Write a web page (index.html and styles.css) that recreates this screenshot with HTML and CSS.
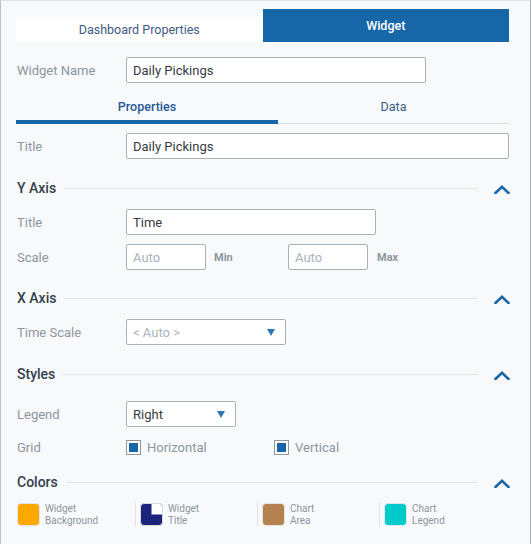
FILE: index.html
```html
<!DOCTYPE html>
<html>
<head>
<meta charset="utf-8">
<link rel="stylesheet" href="styles.css">
</head>
<body>
<div class="panel">
  <div class="tabs">
    <div class="tab">Dashboard Properties</div>
    <div class="tab active">Widget</div>
  </div>

  <div class="row row-name">
    <div class="label">Widget Name</div>
    <div class="field w-name">Daily Pickings</div>
  </div>

  <div class="subtabs">
    <div class="subtab active">Properties</div>
    <div class="subtab">Data</div>
  </div>

  <div class="row row-title">
    <div class="label">Title</div>
    <div class="field w-full">Daily Pickings</div>
  </div>

  <div class="section sec-y">
    <div class="sec-name">Y Axis</div>
    <div class="sec-line"></div>
    <svg class="chev" width="16" height="9" viewBox="0 0 16 9"><polyline points="1.5,8 8,1.8 14.5,8" fill="none" stroke="#1a65a8" stroke-width="2.6" stroke-linecap="square"/></svg>
  </div>

  <div class="row row-ytitle">
    <div class="label">Title</div>
    <div class="field w-ytitle">Time</div>
  </div>

  <div class="row row-scale">
    <div class="label">Scale</div>
    <div class="field w-scale placeholder">Auto</div>
    <div class="minmax mm-min">Min</div>
    <div class="field w-scale placeholder">Auto</div>
    <div class="minmax mm-max">Max</div>
  </div>

  <div class="section sec-x">
    <div class="sec-name">X Axis</div>
    <div class="sec-line"></div>
    <svg class="chev" width="16" height="9" viewBox="0 0 16 9"><polyline points="1.5,8 8,1.8 14.5,8" fill="none" stroke="#1a65a8" stroke-width="2.6" stroke-linecap="square"/></svg>
  </div>

  <div class="row row-time">
    <div class="label">Time Scale</div>
    <div class="field select w-time placeholder"><span>&lt; Auto &gt;</span><span class="arrow"></span></div>
  </div>

  <div class="section sec-styles">
    <div class="sec-name">Styles</div>
    <div class="sec-line"></div>
    <svg class="chev" width="16" height="9" viewBox="0 0 16 9"><polyline points="1.5,8 8,1.8 14.5,8" fill="none" stroke="#1a65a8" stroke-width="2.6" stroke-linecap="square"/></svg>
  </div>

  <div class="row row-legend">
    <div class="label">Legend</div>
    <div class="field select w-legend"><span>Right</span><span class="arrow"></span></div>
  </div>

  <div class="row row-grid">
    <div class="label">Grid</div>
    <div class="check-item ci-h"><span class="check"><span class="check-in"></span></span><span class="check-label">Horizontal</span></div>
    <div class="check-item"><span class="check"><span class="check-in"></span></span><span class="check-label">Vertical</span></div>
  </div>

  <div class="section sec-colors">
    <div class="sec-name">Colors</div>
    <div class="sec-line"></div>
    <svg class="chev" width="16" height="9" viewBox="0 0 16 9"><polyline points="1.5,8 8,1.8 14.5,8" fill="none" stroke="#1a65a8" stroke-width="2.6" stroke-linecap="square"/></svg>
  </div>

  <div class="colors">
    <div class="color-item first">
      <span class="swatch sw-orange"></span>
      <div class="color-label">Widget<br>Background</div>
    </div>
    <div class="color-item">
      <svg class="swatch-svg" width="23" height="23" viewBox="0 0 23 23"><rect x="0.5" y="0.5" width="22" height="22" rx="3.5" fill="#1b237c" stroke="#d9dde2" stroke-width="1"/><path d="M11.5 1 H19.5 A2.5 2.5 0 0 1 22 3.5 V11.5 H11.5 Z" fill="#ffffff"/></svg>
      <div class="color-label">Widget<br>Title</div>
    </div>
    <div class="color-item">
      <span class="swatch sw-brown"></span>
      <div class="color-label">Chart<br>Area</div>
    </div>
    <div class="color-item">
      <span class="swatch sw-teal"></span>
      <div class="color-label">Chart<br>Legend</div>
    </div>
  </div>
</div>
</body>
</html>
```

FILE: styles.css
```css
html, body {
  margin: 0;
  padding: 0;
  background: #ffffff;
}

body {
  font-family: Roboto, "Liberation Sans", Arial, sans-serif;
}

.panel {
  box-sizing: border-box;
  width: 531px;
  height: 544px;
  background: #f7f9fb;
  border-left: 1px solid #b9bfc5;
  border-right: 1px solid #a3abb3;
  border-top: 1px solid #dfe3e7;
  padding: 8px 0 0 15px;
  display: flex;
  flex-direction: column;
}

.tabs {
  display: flex;
  align-items: flex-end;
  width: 493px;
  height: 33px;
}

.tab {
  flex: 1;
  height: 25px;
  background: #ffffff;
  color: #3d5b82;
  font-size: 12.5px;
  display: flex;
  align-items: center;
  justify-content: center;
}

.tab.active {
  height: 33px;
  background: #1766a8;
  color: #ffffff;
  font-weight: 500;
}

.row {
  display: flex;
  align-items: center;
  height: 26px;
}

.label {
  width: 110px;
  padding-left: 1px;
  box-sizing: border-box;
  color: #8d969f;
  font-size: 13px;
}

.field {
  box-sizing: border-box;
  height: 26px;
  background: #ffffff;
  border: 1px solid #a9b1b9;
  border-radius: 2px;
  padding: 0 6px;
  display: flex;
  align-items: center;
  color: #353c44;
  font-size: 13px;
}

.placeholder {
  color: #aab3bc;
}

.row-name { margin-top: 15px; }
.w-name { width: 300px; }

.subtabs {
  display: flex;
  align-items: flex-end;
  height: 41px;
  width: 493px;
}

.subtab {
  box-sizing: border-box;
  width: 231px;
  text-align: center;
  line-height: 16px;
  font-size: 12.5px;
  color: #3f5e82;
  padding-bottom: 8px;
  border-bottom: 1px solid #d6dce2;
}

.subtab.active {
  width: 262px;
  color: #275a96;
  font-weight: 500;
  padding-bottom: 5px;
  border-bottom: 4px solid #1766a8;
}

.row-title { margin-top: 9px; }
.w-full { width: 383px; }

.section {
  display: flex;
  align-items: center;
  height: 20px;
  width: 494px;
}

.sec-name {
  padding-left: 1px;
  color: #34404c;
  font-size: 14px;
  font-weight: 500;
}

.sec-line {
  flex: 1;
  height: 1px;
  background: #e4e8ec;
  margin: 0 16px 0 8px;
}

.chev {
  display: block;
  margin-top: 2px;
}

.sec-y { margin-top: 19px; }
.row-ytitle { margin-top: 11px; }
.w-ytitle { width: 250px; }

.row-scale { margin-top: 9px; }
.w-scale { width: 80px; }

.minmax {
  color: #8d969f;
  font-size: 11px;
  font-weight: 700;
}

.mm-min { width: 82px; padding-left: 8px; box-sizing: border-box; }
.mm-max { padding-left: 9px; }

.sec-x { margin-top: 18px; }
.row-time { margin-top: 11px; }
.w-time { width: 160px; }

.select {
  justify-content: space-between;
  padding-right: 10px;
}

.arrow {
  width: 0;
  height: 0;
  border-left: 4px solid transparent;
  border-right: 4px solid transparent;
  border-top: 7px solid #2b78b8;
}

.sec-styles { margin-top: 19px; }
.row-legend { margin-top: 17px; }
.w-legend { width: 110px; color: #353c44; }

.row-grid {
  margin-top: 13px;
  height: 14px;
}

.check-item {
  display: flex;
  align-items: center;
}

.ci-h { width: 148px; }

.check {
  box-sizing: border-box;
  width: 15px;
  height: 15px;
  border: 1px solid #8f979f;
  background: #ffffff;
  display: flex;
  align-items: center;
  justify-content: center;
}

.check-in {
  width: 9px;
  height: 9px;
  background: #1766a8;
}

.check-label {
  margin-left: 6px;
  color: #8d969f;
  font-size: 13px;
}

.sec-colors { margin-top: 18px; }

.colors {
  display: flex;
  margin-top: 11px;
  height: 24px;
}

.color-item {
  box-sizing: border-box;
  width: 122px;
  height: 24px;
  display: flex;
  align-items: flex-start;
  border-left: 1px solid #dfe3e7;
  padding-left: 4px;
}

.color-item.first {
  width: 119px;
  border-left: none;
  padding-left: 1px;
}

.swatch {
  box-sizing: border-box;
  width: 23px;
  height: 23px;
  border-radius: 4px;
  border: 1px solid #e2e5e9;
}

.swatch-svg {
  display: block;
}

.sw-orange { background: #fda800; }
.sw-brown { background: #b5824f; }
.sw-teal { background: #00cbcb; }

.color-label {
  margin-left: 5px;
  color: #8d969f;
  font-size: 10px;
  line-height: 12px;
}
```
